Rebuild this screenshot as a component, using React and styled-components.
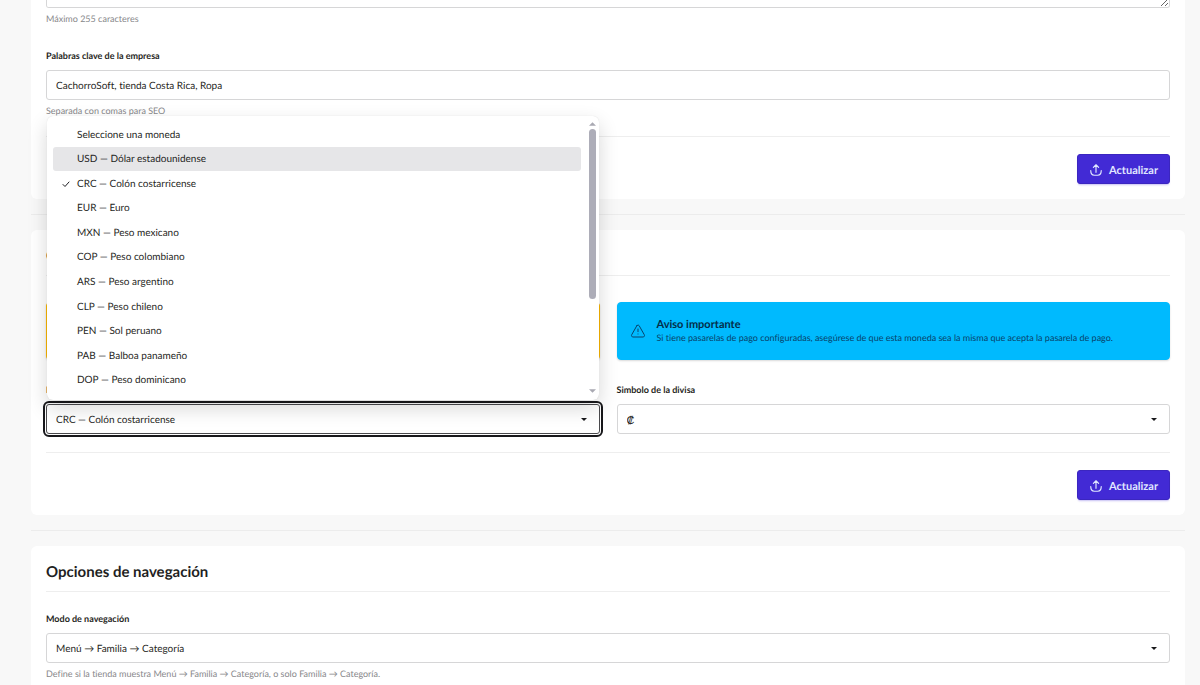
import React, { useState } from "react";
import styled, { createGlobalStyle, css } from "styled-components";

const currencies = [
  "Seleccione una moneda",
  "USD — Dólar estadounidense",
  "CRC — Colón costarricense",
  "EUR — Euro",
  "MXN — Peso mexicano",
  "COP — Peso colombiano",
  "ARS — Peso argentino",
  "CLP — Peso chileno",
  "PEN — Sol peruano",
  "PAB — Balboa panameño",
  "DOP — Peso dominicano",
];

function UploadIcon() {
  return (
    <Icon $size={14} $stroke={2} viewBox="0 0 24 24">
      <path d="M12 16V3M7.500 7.500 12 3l4.500 4.500" />
      <path d="M3 13c0 5.500 2 8 6 8h6c4 0 6-2.500 6-8" />
    </Icon>
  );
}

function WarningIcon() {
  return (
    <Icon $size={16} viewBox="0 0 24 24">
      <path d="M12 9v4m0 3.500v.01M10.300 4 2.600 17.600A2.200 2.200 0 0 0 4.500 21h15a2.200 2.200 0 0 0 1.900-3.400L13.700 4a2 2 0 0 0-3.400 0z" />
    </Icon>
  );
}

function SubmitRow() {
  return (
    <Actions>
      <Button type="submit">
        <UploadIcon />
        <span>Actualizar</span>
      </Button>
    </Actions>
  );
}

function CurrencyMenu({ selected, active, onPick }) {
  return (
    <Menu>
      <Options role="listbox" aria-label="Moneda">
        {currencies.map((c) => (
          <Option
            key={c}
            role="option"
            aria-selected={c === selected}
            $active={c === active}
            onClick={() => onPick(c)}
          >
            <Check>
              {c === selected && (
                <Icon $size={8} $stroke={1} viewBox="0 0 8 8">
                  <path d="M1 4.500 3 6.500 7 2" />
                </Icon>
              )}
            </Check>
            {c}
          </Option>
        ))}
      </Options>
      <Scrollbar>
        <Arrow viewBox="0 0 8 4">
          <path d="M4 0 8 4H0z" />
        </Arrow>
        <Track>
          <Thumb />
        </Track>
        <Arrow viewBox="0 0 8 4">
          <path d="M0 0h8L4 4z" />
        </Arrow>
      </Scrollbar>
    </Menu>
  );
}

function App() {
  const [currency, setCurrency] = useState(currencies[2]);

  return (
    <Page>
      <GlobalStyle />
      <Card $first>
        <TextArea aria-label="Descripción de la empresa" />
        <Help>Máximo 255 caracteres</Help>
        <Field $top={21}>
          <Label htmlFor="keywords">Palabras clave de la empresa</Label>
          <Input
            id="keywords"
            defaultValue="CachorroSoft, tienda Costa Rica, Ropa"
          />
          <Help>Separada con comas para SEO</Help>
        </Field>
        <Divider $top={17} />
        <SubmitRow />
      </Card>

      <Separator />

      <Card>
        <Title>Configuración de moneda</Title>
        <Divider $top={8} />
        <Columns>
          <Alert $color="#fcb700" />
          <Alert $color="#00bafe" role="alert">
            <WarningIcon />
            <div>
              <AlertTitle>Aviso importante</AlertTitle>
              <AlertText>
                Si tiene pasarelas de pago configuradas, asegúrese de que esta
                moneda sea la misma que acepta la pasarela de pago.
              </AlertText>
            </div>
          </Alert>
          <Field>
            <Label htmlFor="currency">Moneda</Label>
            <SelectBox>
              <Select
                id="currency"
                $open
                value={currency}
                onChange={(e) => setCurrency(e.target.value)}
              >
                {currencies.map((c) => (
                  <option key={c}>{c}</option>
                ))}
              </Select>
              <Caret viewBox="0 0 6 3">
                <path d="M0 0h6L3 3z" />
              </Caret>
              <CurrencyMenu
                selected={currency}
                active={currencies[1]}
                onPick={setCurrency}
              />
            </SelectBox>
          </Field>
          <Field>
            <Label htmlFor="symbol">Simbolo de la divisa</Label>
            <SelectBox>
              <SymbolSelect id="symbol">
                <option>₡</option>
              </SymbolSelect>
              <Caret viewBox="0 0 6 3">
                <path d="M0 0h6L3 3z" />
              </Caret>
            </SelectBox>
          </Field>
        </Columns>
        <Divider $top={18} />
        <SubmitRow />
      </Card>

      <Separator />

      <Card>
        <Title>Opciones de navegación</Title>
        <Divider $top={8} />
        <Field $top={19}>
          <Label htmlFor="navigation">Modo de navegación</Label>
          <SelectBox>
            <Select id="navigation">
              <option>Menú → Familia → Categoría</option>
            </Select>
            <Caret viewBox="0 0 6 3">
              <path d="M0 0h6L3 3z" />
            </Caret>
          </SelectBox>
          <Help>
            Define si la tienda muestra Menú → Familia → Categoría, o solo
            Familia → Categoría.
          </Help>
        </Field>
      </Card>
    </Page>
  );
}

export default App;

const GlobalStyle = createGlobalStyle`
  * {
    box-sizing: border-box;
  }
  body {
    margin: 0;
    height: 100vh;
    overflow: hidden;
    background: #f8f8f8;
    color: #1f1f23;
    font-family: Lato, "Liberation Sans", sans-serif;
    font-size: 10px;
    font-variant-ligatures: none;
    text-rendering: geometricPrecision;
  }
`;

const Page = styled.main`
  padding: 0 15px 0 31px;
`;

const Card = styled.section`
  padding: ${(props) => (props.$first ? "0 15px 15px" : "15px")};
  border-radius: ${(props) => (props.$first ? "0 0 6px 6px" : "6px")};
  background: white;
`;

const Separator = styled.hr`
  height: 1px;
  margin: 15px 0;
  border: none;
  background: #ececec;
`;

const Divider = styled.hr`
  height: 1px;
  margin: ${(props) => props.$top}px 0 0;
  border: none;
  background: #eeeeee;
`;

const Title = styled.h2`
  margin: 0;
  font-size: 15px;
  font-weight: 700;
  line-height: 22px;
`;

const Columns = styled.div`
  display: grid;
  grid-template-columns: 1fr 1fr;
  gap: 22px 17px;
  margin-top: 26px;
`;

const Field = styled.div`
  margin-top: ${(props) => props.$top || 0}px;
`;

const Label = styled.label`
  display: block;
  margin-bottom: 6px;
  font-size: 9px;
  font-weight: 700;
  line-height: 16px;
`;

const Help = styled.p`
  margin: 3px 0 0;
  color: #87878a;
  font-size: 9px;
  line-height: 16px;
`;

const control = css`
  display: block;
  width: 100%;
  height: 30px;
  padding: 2px 9px 0;
  border: 1px solid #d6d6d7;
  border-radius: 3px;
  background: white;
  color: inherit;
  font-family: inherit;
  font-size: 10px;
  font-variant-ligatures: inherit;
  text-rendering: inherit;
`;

const TextArea = styled.textarea`
  ${control}
  height: 8px;
  padding: 0;
  border-top: none;
  border-radius: 0 0 3px 3px;
  resize: vertical;
`;

const Input = styled.input`
  ${control}
`;

const Select = styled.select`
  ${control}
  appearance: none;
  ${(props) =>
    props.$open &&
    css`
      border-color: #4a4a4d;
      outline: 2px solid #18181b;
      outline-offset: 1px;
    `}
`;

const SymbolSelect = styled(Select)`
  font-family: "Open Sans", sans-serif;
  font-size: 11px;
`;

const SelectBox = styled.div`
  position: relative;
`;

const Caret = styled.svg`
  position: absolute;
  top: 14px;
  right: 13px;
  width: 6px;
  height: 3px;
  fill: #18181b;
  pointer-events: none;
`;

const Icon = styled.svg`
  flex: none;
  width: ${(props) => props.$size}px;
  height: ${(props) => props.$size}px;
  fill: none;
  stroke: currentColor;
  stroke-width: ${(props) => props.$stroke || 1.5};
  stroke-linecap: round;
  stroke-linejoin: round;
`;

const Actions = styled.div`
  display: flex;
  justify-content: flex-end;
  margin-top: 17px;
`;

const Button = styled.button`
  display: flex;
  align-items: center;
  gap: 6px;
  height: 30px;
  padding: 2px 11px 0;
  border: 1px solid #3b26c0;
  border-radius: 3px;
  background: #422ad5;
  box-shadow: 0 2px 2px -1px rgba(66, 42, 213, 0.3);
  color: #e0e7ff;
  font-family: inherit;
  font-size: 11px;
  font-weight: 700;
  text-rendering: inherit;
  cursor: pointer;
`;

const Alert = styled.div`
  display: flex;
  align-items: center;
  gap: 11px;
  height: 58px;
  padding: 0 12px;
  border: 1px solid ${(props) => props.$color};
  border-radius: 4px;
  background: ${(props) => props.$color};
  box-shadow: 0 1px 2px rgba(0, 0, 0, 0.15);
  color: #08426a;
`;

const AlertTitle = styled.h3`
  margin: 0;
  color: #042e49;
  font-size: 11px;
  font-weight: 700;
  line-height: 14px;
`;

const AlertText = styled.p`
  margin: 0;
  font-size: 9px;
  line-height: 12px;
`;

const Menu = styled.div`
  position: absolute;
  z-index: 1;
  right: 1px;
  bottom: 34px;
  left: 1px;
  display: flex;
  height: 284px;
  padding: 6px 2px 2px 6px;
  border-radius: 6px;
  background: white;
  box-shadow: 0 0 1px rgba(0, 0, 0, 0.15), 0 8px 20px rgba(0, 0, 0, 0.16);
`;

const Options = styled.ul`
  flex: 1;
  display: grid;
  grid-auto-rows: 1fr;
  height: 270px;
  margin: 0;
  padding: 0;
  list-style: none;
`;

const Option = styled.li`
  display: flex;
  align-items: center;
  padding: 1px 9px 0;
  border-radius: 3px;
  background: ${(props) => (props.$active ? "#e6e6e8" : "transparent")};
  cursor: pointer;
`;

const Check = styled.span`
  display: flex;
  width: 15px;
`;

const Scrollbar = styled.div`
  display: flex;
  flex-direction: column;
  align-items: center;
  width: 8px;
  margin: 0 0 2px 8px;
`;

const Arrow = styled.svg`
  width: 7px;
  height: 4px;
  margin-bottom: 3px;
  fill: #a9a9b2;
`;

const Track = styled.div`
  flex: 1;
  width: 7px;
`;

const Thumb = styled.div`
  height: 170px;
  border-radius: 4px;
  background: #adadb8;
`;
